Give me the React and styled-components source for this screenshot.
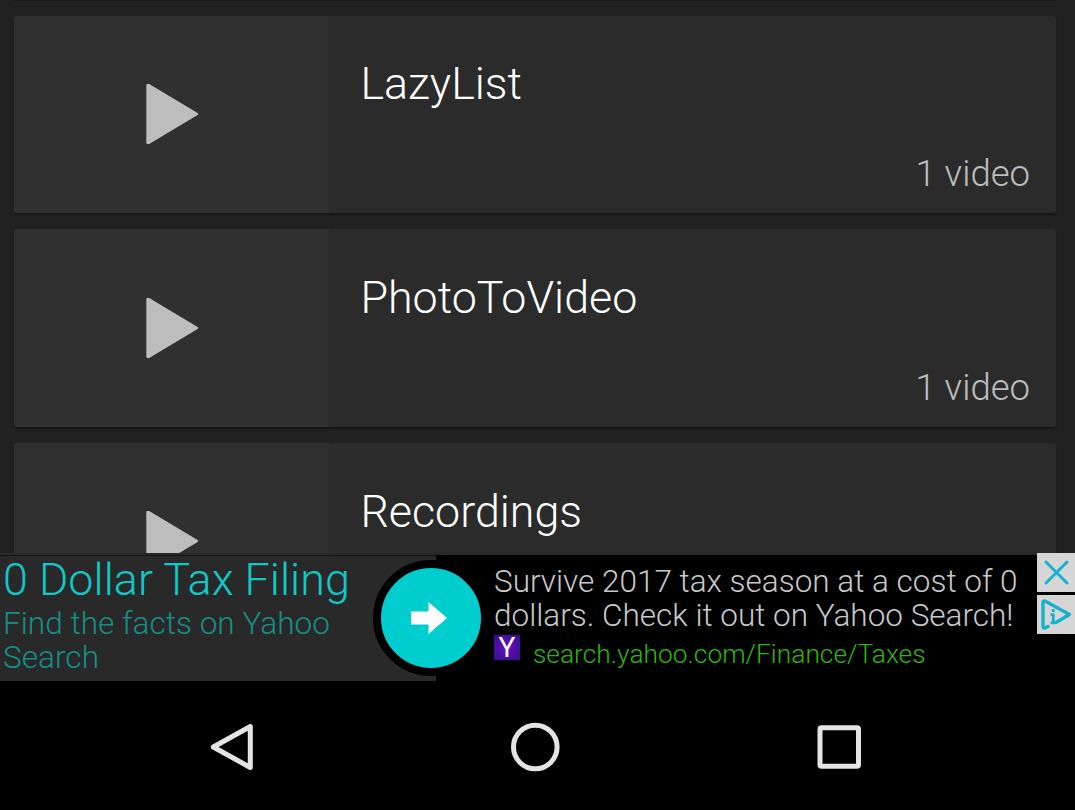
import React from 'react';
import styled, { createGlobalStyle } from 'styled-components';

const GlobalStyle = createGlobalStyle`
  * { box-sizing: border-box; }
  body { margin: 0; background: #000; font-family: Roboto, "Liberation Sans", sans-serif; font-weight: 300; }
  svg { display: block; }
`;

const Screen = styled.div`
  width: 1075px;
  height: 810px;
  overflow: hidden;
  display: flex;
  flex-direction: column;
  background: #000;
`;

const FolderList = styled.main`
  height: 553px;
  flex: none;
  overflow: hidden;
  background: #212121;
  padding: 0 19px 0 14px;
  display: flex;
  flex-direction: column;
  gap: 16.2px;
`;

const Card = styled.article`
  flex: none;
  height: 197.4px;
  display: flex;
  overflow: hidden;
  background: #2b2b2b;
  border-radius: 3px;
  box-shadow: 0 2px 2px rgba(0, 0, 0, 0.35);
`;

const CardEdge = styled.div`
  flex: none;
  height: 1px;
  margin-bottom: -1.4px;
  background: #191a1d;
`;

const Thumbnail = styled.div`
  width: 315px;
  background: #303030;
  display: flex;
  align-items: center;
  padding: 0 0 0.4px 131px;
`;

const Details = styled.div`
  flex: 1;
  display: flex;
  flex-direction: column;
  justify-content: space-between;
  padding: 41.6px 26px 17px 31.4px;
`;

const FolderName = styled.h2`
  margin: 0;
  font-size: 44.8px;
  line-height: 54px;
  font-weight: 300;
  color: #fff;
`;

const VideoCount = styled.span`
  align-self: flex-end;
  font-size: 36.5px;
  line-height: 44px;
  color: #bdbdbd;
`;

const AdBanner = styled.aside`
  position: relative;
  height: 128px;
  flex: none;
  display: flex;
  background: #000;
  border-top: 2px solid #292929;
`;

const AdHeadline = styled.div`
  width: 436px;
  height: 126px;
  padding: 0 0 0 3px;
  background: #292929;
  border-top: 1px solid #141414;
  white-space: nowrap;
`;

const AdTitle = styled.div`
  margin-top: -1px;
  font-size: 44.8px;
  line-height: 50px;
  letter-spacing: 0.08px;
  color: #0fc9c9;
`;

const AdSubtitle = styled.div`
  margin-top: 2px;
  font-size: 31.6px;
  line-height: 34px;
  color: #158f86;
`;

const AdButton = styled.div`
  position: absolute;
  left: 373px;
  top: 5px;
  width: 116px;
  height: 116px;
  border: 8px solid #000;
  border-radius: 50%;
  background: #00cdcd;
  display: flex;
  align-items: center;
  justify-content: center;
  padding-right: 4px;
`;

const AdBody = styled.div`
  flex: 1;
  padding: 10px 0 0 58px;
  white-space: nowrap;
`;

const AdText = styled.div`
  font-size: 31.5px;
  line-height: 34px;
  color: #c9c9c9;
`;

const AdLink = styled.div`
  display: flex;
  align-items: flex-start;
  gap: 13px;
  margin-top: 2px;
  font-size: 26.35px;
  line-height: 38px;
  color: #2fb50f;
`;

const YahooLogo = styled.span`
  width: 26px;
  height: 25px;
  background: radial-gradient(#5a10b4 20%, #3a0a8c 100%);
  color: #fff;
  font-size: 28px;
  line-height: 25px;
  font-weight: 400;
  text-align: center;
`;

const AdControls = styled.div`
  position: absolute;
  right: 0;
  top: -2px;
  display: flex;
  flex-direction: column;
  gap: 3px;
`;

const AdControl = styled.div`
  width: 38px;
  height: 39px;
  background: #d6d6d6;
`;

const NavBar = styled.nav`
  flex: 1;
  display: flex;
  align-items: center;
  padding: 3px 0 0 208px;
`;

const NavButton = styled.div`
  width: 50px;
  height: 54px;
  margin-right: ${(p) => p.$after || 0}px;
`;

const folders = [
  { name: 'LazyList', count: '1 video' },
  { name: 'PhotoToVideo', count: '1 video' },
  { name: 'Recordings', count: '1 video' },
];

const PlayIcon = () => (
  <svg width="54" height="62" viewBox="0 0 54 62">
    <path d="M2.5 2.3H4L52 31L4 59.7H2.5Z" fill="#bdbdbd" stroke="#bdbdbd" strokeWidth="2.4" strokeLinejoin="round" />
  </svg>
);

export default function App() {
  return (
    <>
      <GlobalStyle />
      <Screen>
        <FolderList>
          <CardEdge />
          {folders.map((f) => (
            <Card key={f.name}>
              <Thumbnail><PlayIcon /></Thumbnail>
              <Details>
                <FolderName>{f.name}</FolderName>
                <VideoCount>{f.count}</VideoCount>
              </Details>
            </Card>
          ))}
        </FolderList>
        <AdBanner>
          <AdHeadline>
            <AdTitle>0 Dollar Tax Filing</AdTitle>
            <AdSubtitle>Find the facts on Yahoo<br />Search</AdSubtitle>
          </AdHeadline>
          <AdBody>
            <AdText>Survive 2017 tax season at a cost of 0<br />dollars. Check it out on Yahoo Search!</AdText>
            <AdLink>
              <YahooLogo>Y</YahooLogo>
              <span>search.yahoo.com/Finance/Taxes</span>
            </AdLink>
          </AdBody>
          <AdButton>
            <svg width="36" height="32" viewBox="0 0 36 32">
              <path d="M0 9.5H17.5V0L36 16L17.5 32V22.5H0Z" fill="#fff" />
            </svg>
          </AdButton>
          <AdControls>
            <AdControl>
              <svg width="38" height="39" viewBox="0 0 38 39" fill="none" stroke="#14b2cd" strokeWidth="3" strokeLinecap="round">
                <path d="M9 9L30 30M30 9L9 30" />
              </svg>
            </AdControl>
            <AdControl>
              <svg width="38" height="39" viewBox="0 0 38 39" fill="none" stroke="#14b2cd" strokeWidth="3.4" strokeLinecap="round" strokeLinejoin="round">
                <path d="M11 31.5L8 33Q6 33.5 6 31V8Q6 5 9 6.5L32.5 19.5L19 27.5" />
                <path d="M16.3 18.5V29M13.6 19.6H16.3M13.6 27.8H17.7M16.3 14V17" strokeWidth="2.8" strokeLinecap="butt" />
              </svg>
            </AdControl>
          </AdControls>
        </AdBanner>
        <NavBar>
          <NavButton $after={252}>
            <svg width="50" height="54" viewBox="0 0 50 54">
              <path d="M42.3 6.5V47.5L5.3 27Z" fill="none" stroke="#e4e4e4" strokeWidth="5" strokeLinejoin="round" />
            </svg>
          </NavButton>
          <NavButton $after={254}>
            <svg width="50" height="54" viewBox="0 0 50 54">
              <circle cx="25.3" cy="27" r="21.8" fill="none" stroke="#e4e4e4" strokeWidth="5" />
            </svg>
          </NavButton>
          <NavButton>
            <svg width="50" height="54" viewBox="0 0 50 54">
              <rect x="6" y="7.8" width="38.5" height="38.5" rx="1.5" fill="none" stroke="#e4e4e4" strokeWidth="5" />
            </svg>
          </NavButton>
        </NavBar>
      </Screen>
    </>
  );
}
